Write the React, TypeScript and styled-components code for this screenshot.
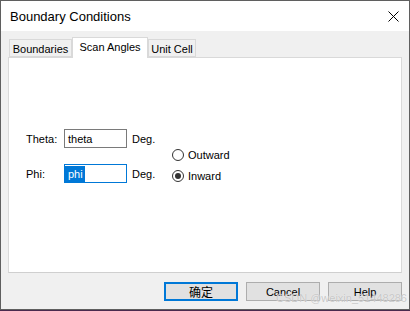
import React from 'react';
import styled, { createGlobalStyle } from 'styled-components';

const GlobalStyle = createGlobalStyle`
  html, body {
    margin: 0;
    padding: 0;
    background: #4a2a4e;
  }
  body {
    font-family: "Liberation Sans", Arial, sans-serif;
    font-size: 11px;
    color: #000;
  }
`;

const Window = styled.div`
  position: relative;
  width: 410px;
  height: 310px;
  box-sizing: border-box;
  border: 1px solid #5f5f5f;
  background: #f0f0f0;
  display: flex;
  flex-direction: column;
`;

const TitleBar = styled.div`
  height: 30px;
  background: #fff;
  display: flex;
  align-items: center;
  justify-content: space-between;
  padding: 0 10px 0 9px;
`;

const Title = styled.span`
  font-size: 13px;
  margin-top: 1px;
`;

const Body = styled.div`
  flex: 1;
  display: flex;
  flex-direction: column;
  padding: 6px 7px 8px 7px;
`;

const TabStrip = styled.div`
  display: flex;
  align-items: flex-end;
  height: 21px;
  padding-left: 1px;
  position: relative;
  z-index: 1;
  margin-bottom: -1px;
`;

const Tab = styled.div<{ $active?: boolean; $w: number }>`
  box-sizing: border-box;
  width: ${({ $w }) => $w}px;
  height: ${({ $active }) => ($active ? 21 : 18)}px;
  margin-bottom: ${({ $active }) => ($active ? 0 : 1)}px;
  border: 1px solid #d9d9d9;
  border-bottom: ${({ $active }) => ($active ? 'none' : '1px solid #d9d9d9')};
  background: ${({ $active }) => ($active ? '#fff' : '#f0f0f0')};
  display: flex;
  justify-content: center;
  align-items: ${({ $active }) => ($active ? 'flex-start' : 'center')};
  padding-top: ${({ $active }) => ($active ? 3 : 1)}px;
  white-space: nowrap;
`;

const Panel = styled.div`
  height: 216px;
  box-sizing: border-box;
  background: #fff;
  border: 1px solid #d9d9d9;
  border-bottom-color: #cfcfcf;
  padding: 71px 0 0 17px;
  display: flex;
`;

const Fields = styled.div`
  width: 146px;
  display: flex;
  flex-direction: column;
  gap: 16px;
`;

const FieldRow = styled.div`
  display: flex;
  align-items: center;
  height: 19px;
`;

const Label = styled.span`
  width: 38px;
`;

const TextBox = styled.div<{ $focused?: boolean }>`
  box-sizing: border-box;
  width: 63px;
  height: 19px;
  border: 1px solid ${({ $focused }) => ($focused ? '#0078d7' : '#7a7a7a')};
  display: flex;
  align-items: center;
  padding-left: ${({ $focused }) => ($focused ? 0 : 3)}px;
`;

const Selection = styled.span`
  background: #0078d7;
  color: #fff;
  height: 16px;
  line-height: 16px;
  padding: 0 2px 0 3px;
`;

const Unit = styled.span`
  margin-left: 5px;
`;

const RadioGroup = styled.div`
  margin-top: 15px;
  display: flex;
  flex-direction: column;
`;

const RadioRow = styled.div`
  height: 21px;
  display: flex;
  align-items: center;
  gap: 4px;
`;

const RadioCircle = styled.span<{ $checked?: boolean }>`
  box-sizing: border-box;
  width: 12px;
  height: 12px;
  border-radius: 50%;
  border: 1px solid #333;
  background: #fff;
  display: flex;
  align-items: center;
  justify-content: center;
  &::after {
    content: '';
    width: 6px;
    height: 6px;
    border-radius: 50%;
    background: ${({ $checked }) => ($checked ? '#333' : 'transparent')};
  }
`;

const ButtonRow = styled.div`
  margin-top: 9px;
  display: flex;
  justify-content: flex-end;
  gap: 8px;
  padding-right: 0;
`;

const Button = styled.div<{ $default?: boolean }>`
  box-sizing: border-box;
  width: 74px;
  height: 19px;
  background: #e1e1e1;
  border: ${({ $default }) => ($default ? '2px solid #0078d7' : '1px solid #adadad')};
  display: flex;
  align-items: center;
  justify-content: center;
  font-size: ${({ $default }) => ($default ? 12 : 11)}px;
  font-family: "Liberation Sans", "Noto Sans CJK SC", sans-serif;
`;

const Watermark = styled.span`
  position: absolute;
  right: 2px;
  bottom: 5px;
  font-size: 11px;
  color: rgba(190, 190, 190, 0.85);
  text-shadow: 0 0 1px rgba(255, 255, 255, 0.8);
  pointer-events: none;
  white-space: nowrap;
`;

const CloseIcon = () => (
  <svg width="11" height="11" viewBox="0 0 11 11">
    <path d="M0.5 0.5 L10.5 10.5 M10.5 0.5 L0.5 10.5" stroke="#000" strokeWidth="1" />
  </svg>
);

export default function App() {
  return (
    <>
      <GlobalStyle />
      <Window>
        <TitleBar>
          <Title>Boundary Conditions</Title>
          <CloseIcon />
        </TitleBar>
        <Body>
          <TabStrip>
            <Tab $w={63}>Boundaries</Tab>
            <Tab $w={76} $active>Scan Angles</Tab>
            <Tab $w={48}>Unit Cell</Tab>
          </TabStrip>
          <Panel>
            <Fields>
              <FieldRow>
                <Label>Theta:</Label>
                <TextBox>theta</TextBox>
                <Unit>Deg.</Unit>
              </FieldRow>
              <FieldRow>
                <Label>Phi:</Label>
                <TextBox $focused>
                  <Selection>phi</Selection>
                </TextBox>
                <Unit>Deg.</Unit>
              </FieldRow>
            </Fields>
            <RadioGroup>
              <RadioRow>
                <RadioCircle />
                Outward
              </RadioRow>
              <RadioRow>
                <RadioCircle $checked />
                Inward
              </RadioRow>
            </RadioGroup>
          </Panel>
          <ButtonRow>
            <Button $default>确定</Button>
            <Button>Cancel</Button>
            <Button>Help</Button>
          </ButtonRow>
        </Body>
        <Watermark>CSDN @weixin_51448286</Watermark>
      </Window>
    </>
  );
}
